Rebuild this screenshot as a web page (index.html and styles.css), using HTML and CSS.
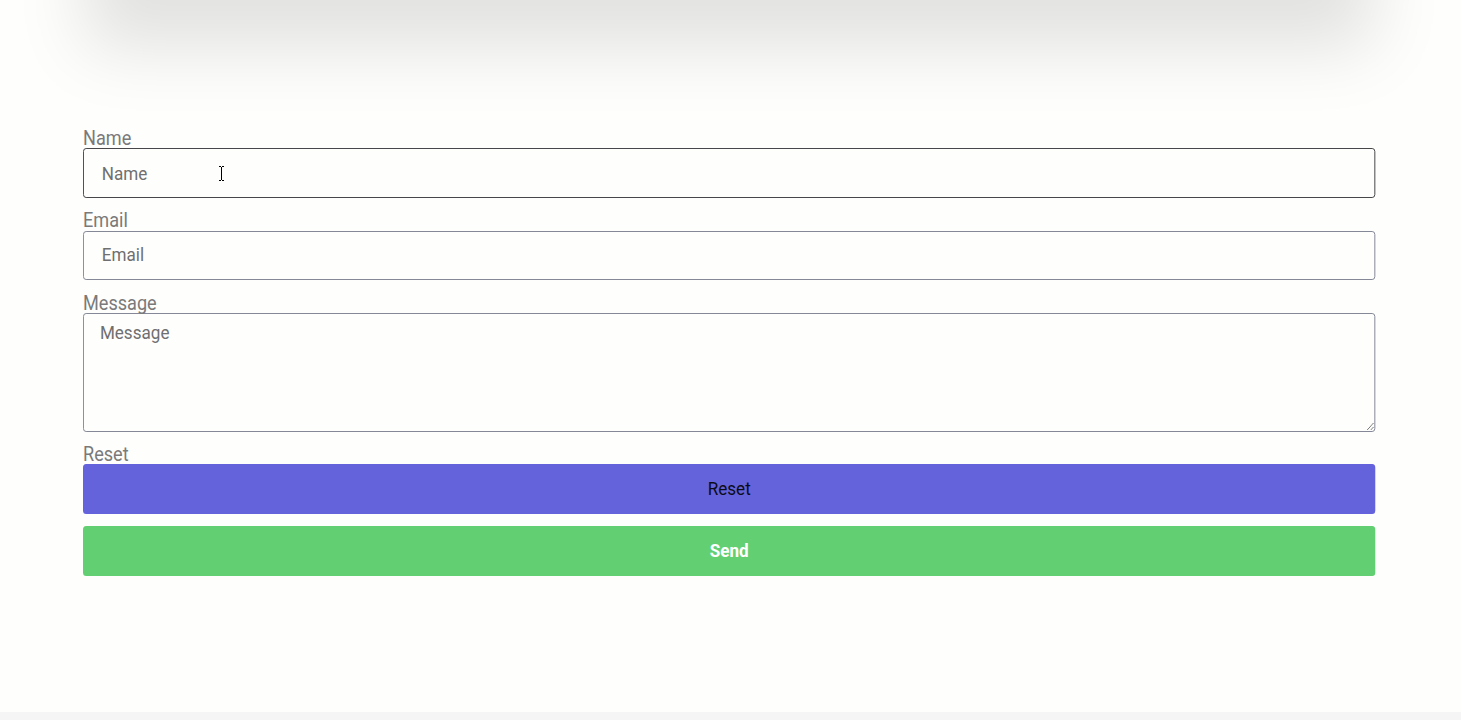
FILE: index.html
```
<!DOCTYPE html>
<html lang="en">
<head>
  <meta charset="UTF-8" />
  <meta name="viewport" content="width=device-width, initial-scale=1" />
  <title>Contact</title>
  <link rel="stylesheet" href="styles.css">
</head>
<body>
  <main class="page">
    <div class="card"></div>
    <form class="contact-form">
      <div class="field">
        <label for="name">Name</label>
        <input type="text" id="name" class="active" name="name" placeholder="Name" />
      </div>
      <div class="field">
        <label for="email">Email</label>
        <input type="email" id="email" name="email" placeholder="Email" />
      </div>
      <div class="field field-message">
        <label for="message">Message</label>
        <textarea id="message" name="message" placeholder="Message"></textarea>
      </div>
      <div class="field">
        <label for="reset">Reset</label>
        <button type="reset" id="reset" class="btn-reset">Reset</button>
      </div>
      <button type="submit" class="btn-send">Send</button>
    </form>
    <svg class="cursor" width="7" height="15" viewBox="0 0 7 15">
      <path d="M1 .5h2M4 .5h2M3.5 1v13M1 14.5h2M4 14.5h2" fill="none" stroke="#000" />
    </svg>
  </main>
  <footer class="footer"></footer>
</body>
</html>
```
FILE: styles.css
```
* {
  box-sizing: border-box;
}
body {
  margin: 0;
  height: 720px;
  overflow: hidden;
  background: #fefefd;
  font-family: Roboto, sans-serif;
}
.page {
  position: relative;
  display: flow-root;
  height: 712px;
  padding: 0 86px 0 83px;
}
.card {
  height: 300px;
  margin-top: -300px;
  box-shadow: 0 50px 66px -2px rgba(0, 0, 6, 0.115);
}
.contact-form {
  width: 1452.25px;
  margin-top: 128px;
  transform: scaleX(0.89);
  transform-origin: left top;
}
.field {
  height: 70px;
  margin-bottom: 12.4px;
}
.field-message {
  height: 138.6px;
}
label {
  display: block;
  height: 20.4px;
  color: #7a7a7a;
  font-size: 20.35px;
  line-height: 20px;
}
input,
textarea {
  display: block;
  width: 100%;
  height: 49.6px;
  margin: 0;
  padding: 0 20.2px;
  border: 1px solid #7d8290;
  border-radius: 3.5px;
  background: transparent;
  font-family: inherit;
  font-size: 19.2px;
  outline: none;
}
input {
  padding-bottom: 2px;
}
.active {
  padding-bottom: 0;
  border-color: #3c3c3e;
}
textarea {
  height: 118.8px;
  padding: 5px 18px;
  line-height: 27px;
  resize: vertical;
}
::placeholder {
  color: #6f6f70;
  opacity: 1;
}
button {
  display: block;
  width: 100%;
  height: 49.6px;
  padding: 0 0 1px;
  border: none;
  border-radius: 3.5px;
  color: #0c0c14;
  font-family: inherit;
  font-size: 19.2px;
}
.btn-reset {
  background: #6463dc;
}
.btn-send {
  background: #62d072;
  color: #fff;
  font-weight: bold;
}
.cursor {
  position: absolute;
  left: 218px;
  top: 166px;
}
.footer {
  height: 8px;
  background: #f5f5f6;
}
```
